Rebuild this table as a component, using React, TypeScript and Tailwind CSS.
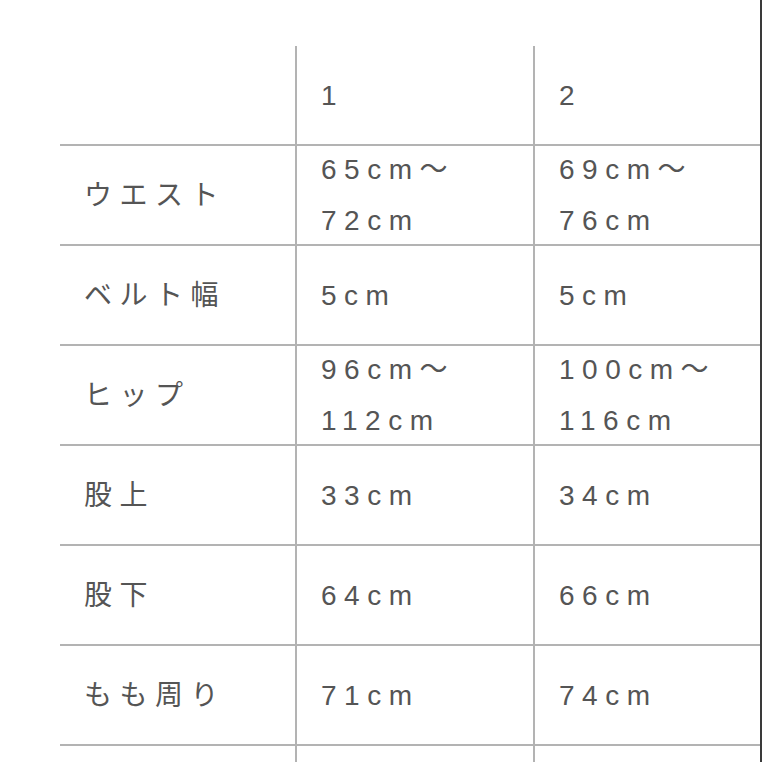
const rows: { label: string; a: string[]; b: string[] }[] = [
  { label: "ウエスト", a: ["65cm〜", "72cm"], b: ["69cm〜", "76cm"] },
  { label: "ベルト幅", a: ["5cm"], b: ["5cm"] },
  { label: "ヒップ", a: ["96cm〜", "112cm"], b: ["100cm〜", "116cm"] },
  { label: "股上", a: ["33cm"], b: ["34cm"] },
  { label: "股下", a: ["64cm"], b: ["66cm"] },
  { label: "もも周り", a: ["71cm"], b: ["74cm"] },
  { label: "", a: [], b: [] },
];

function Cell({ lines, last }: { lines: string[]; last?: boolean }) {
  return (
    <div
      className={
        "flex h-[100px] flex-col justify-center border-b-2 border-[#b3b3b3] pl-[24px] " +
        (last ? "" : "border-r-2")
      }
    >
      {lines.map((l, i) => (
        <div key={i} className="leading-[51px]">
          {l}
        </div>
      ))}
    </div>
  );
}

export default function App() {
  return (
    <div className="h-[762px] w-[762px] overflow-hidden border-r-2 border-[#3a3a3a] bg-white">
      <div
        className="grid grid-cols-[237px_238px_225px] pl-[60px] pt-[46px] text-[28px] tracking-[7.5px] text-[#555555]"
        style={{ fontFamily: '"Liberation Sans", "Noto Sans CJK JP", sans-serif' }}
      >
        <Cell lines={[]} />
        <Cell lines={["1"]} />
        <Cell lines={["2"]} last />
        {rows.map((r, i) => (
          <div key={i} className="contents">
            <Cell lines={r.label ? [r.label] : []} />
            <Cell lines={r.a} />
            <Cell lines={r.b} last />
          </div>
        ))}
      </div>
    </div>
  );
}
